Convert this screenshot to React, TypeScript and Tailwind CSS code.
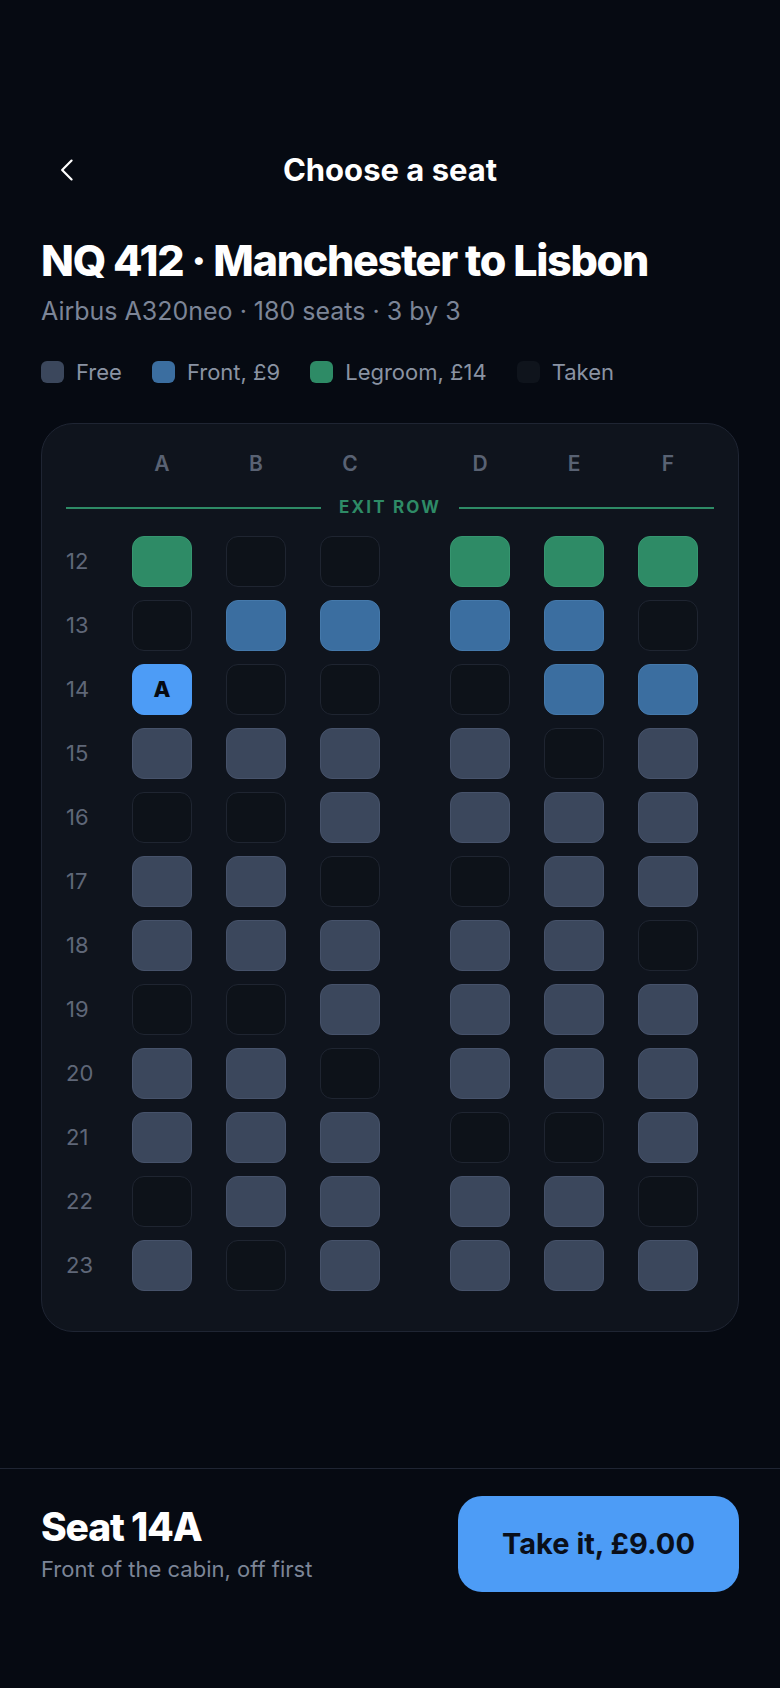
import React from "react";

type Seat = "free" | "front" | "leg" | "taken" | "sel";

const letters = ["A", "B", "C", "D", "E", "F"];

// f = free, p = front, l = legroom, x = taken, s = selected
const rows: [number, string][] = [
  [12, "lxxlll"],
  [13, "xppppx"],
  [14, "sxxxpp"],
  [15, "ffffxf"],
  [16, "xxffff"],
  [17, "ffxxff"],
  [18, "fffffx"],
  [19, "xxffff"],
  [20, "ffxfff"],
  [21, "fffxxf"],
  [22, "xffffx"],
  [23, "fxffff"],
];

const codeMap: Record<string, Seat> = { f: "free", p: "front", l: "leg", x: "taken", s: "sel" };

const seatClass: Record<Seat, string> = {
  free: "bg-[#3b475c] border border-[#46526a]",
  front: "bg-[#3b6ea0] border border-[#4579ab]",
  leg: "bg-[#2e8b66] border border-[#369670]",
  taken: "bg-[#0d1219] border border-[#1f2531]",
  sel: "bg-[#4d9cf6] border border-[#4d9cf6]",
};

function SeatBox({ kind, letter }: { kind: Seat; letter: string }) {
  return (
    <div className={`w-[60px] h-[51px] rounded-[12px] flex items-center justify-center ${seatClass[kind]}`}>
      {kind === "sel" && <span className="text-[22px] font-extrabold text-[#060a12]">{letter}</span>}
    </div>
  );
}

function LegendItem({ color, label }: { color: string; label: string }) {
  return (
    <div className="flex items-center gap-[12px]">
      <span className={`w-[23px] h-[22px] rounded-[6px] ${color}`} />
      <span className="text-[22px] text-[#8a93a3]">{label}</span>
    </div>
  );
}

export default function App() {
  return (
    <div
      className="min-h-[1688px] bg-[#060a12] text-white flex flex-col"
      style={{ fontFamily: "Inter, 'Noto Sans', sans-serif" }}
    >
      <div className="px-[41px]">
        {/* header */}
        <div className="mt-[142px] h-[56px] grid grid-cols-[1fr_auto_1fr] items-center">
          <button className="w-[40px] h-[40px] flex items-center justify-start">
            <svg width="28" height="28" viewBox="0 0 28 28" fill="none" className="ml-[18px]">
              <path d="M14 2 L2 14 L14 26" stroke="white" strokeWidth="2.8" strokeLinecap="round" strokeLinejoin="round" transform="translate(2 0)" />
            </svg>
          </button>
          <h1 className="text-[31px] font-bold">Choose a seat</h1>
          <div />
        </div>

        <h2 className="mt-[38px] text-[43px] leading-[48px] font-extrabold tracking-[-0.03em]">
          NQ 412 · Manchester to Lisbon
        </h2>
        <p className="mt-[12px] text-[25px] leading-[30px] text-[#7c8597]">
          Airbus A320neo · 180 seats · 3 by 3
        </p>

        {/* legend */}
        <div className="mt-[34px] h-[24px] flex items-center gap-[30px]">
          <LegendItem color="bg-[#3b475c]" label="Free" />
          <LegendItem color="bg-[#3b6ea0]" label="Front, £9" />
          <LegendItem color="bg-[#2e8b66]" label="Legroom, £14" />
          <LegendItem color="bg-[#0f141c]" label="Taken" />
        </div>

        {/* seat map */}
        <div className="mt-[39px] rounded-[32px] bg-[#0f141d] border border-[#1f2533] px-[24px] pt-[28px] pb-[40px]">
          <div className="flex h-[24px] items-center">
            <div className="w-[66px]" />
            <div className="flex gap-[34px]">
              {letters.slice(0, 3).map((l) => (
                <div key={l} className="w-[60px] text-center text-[21px] font-semibold text-[#596273]">{l}</div>
              ))}
            </div>
            <div className="flex gap-[34px] ml-[70px]">
              {letters.slice(3).map((l) => (
                <div key={l} className="w-[60px] text-center text-[21px] font-semibold text-[#596273]">{l}</div>
              ))}
            </div>
          </div>

          <div className="mt-[22px] h-[20px] flex items-center gap-[18px]">
            <div className="flex-1 h-[2px] bg-[#2e8b66]" />
            <span className="text-[17px] font-bold tracking-[0.13em] text-[#2e8b66]">EXIT ROW</span>
            <div className="flex-1 h-[2px] bg-[#2e8b66]" />
          </div>

          <div className="mt-[18px] flex flex-col gap-[13px]">
            {rows.map(([n, codes]) => {
              const seats = codes.split("").map((c) => codeMap[c]);
              return (
                <div key={n} className="flex items-center h-[51px]">
                  <div className="w-[66px] text-[22px] text-[#5f6778]">{n}</div>
                  <div className="flex gap-[34px]">
                    {seats.slice(0, 3).map((s, i) => (
                      <SeatBox key={i} kind={s} letter={letters[i]} />
                    ))}
                  </div>
                  <div className="flex gap-[34px] ml-[70px]">
                    {seats.slice(3).map((s, i) => (
                      <SeatBox key={i} kind={s} letter={letters[i + 3]} />
                    ))}
                  </div>
                </div>
              );
            })}
          </div>
        </div>
      </div>

      {/* footer */}
      <div className="mt-auto border-t border-[#1f2533] px-[41px] pt-[27px] pb-[96px] flex items-center justify-between">
        <div>
          <div className="text-[39px] leading-[42px] font-extrabold tracking-[-0.03em]">Seat 14A</div>
          <div className="mt-[7px] text-[22px] leading-[28px] text-[#7c8597]">Front of the cabin, off first</div>
        </div>
        <button className="w-[281px] h-[96px] rounded-[24px] bg-[#4d9cf6] text-[#0a0f1a] text-[29px] font-bold">
          Take it, £9.00
        </button>
      </div>
    </div>
  );
}
